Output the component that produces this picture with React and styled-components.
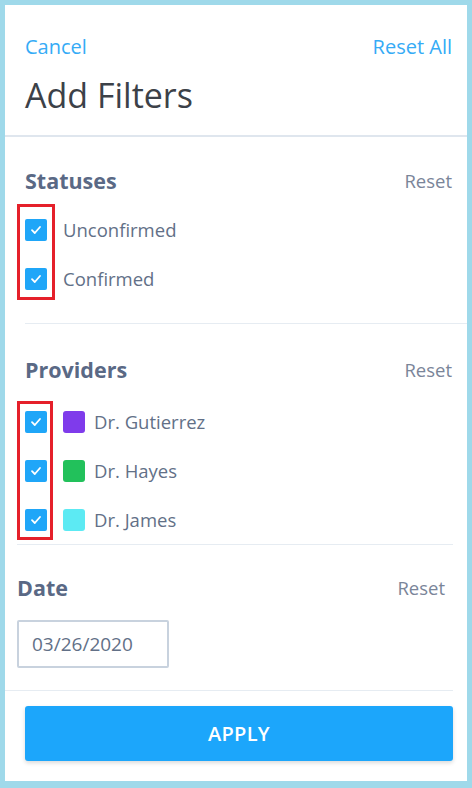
import React from "react";
import styled, { createGlobalStyle } from "styled-components";

const GlobalStyle = createGlobalStyle`
  html, body {
    margin: 0;
    padding: 0;
    background: #ffffff;
  }
  * {
    box-sizing: border-box;
  }
`;

const Frame = styled.div`
  width: 472px;
  height: 788px;
  border: 5px solid #9fd9ea;
  border-bottom-width: 7px;
  background: #ffffff;
  display: flex;
  flex-direction: column;
  font-family: "Open Sans", "Liberation Sans", sans-serif;
`;

const Header = styled.div`
  padding: 30px 15px 0 20px;
`;

const TopRow = styled.div`
  display: flex;
  justify-content: space-between;
  align-items: center;
  height: 22px;
`;

const LinkText = styled.span`
  color: #35abf6;
  font-size: 20px;
`;

const Title = styled.h1`
  margin: 18px 0 0;
  font-size: 34px;
  line-height: 40px;
  font-weight: 400;
  color: #3c4148;
  height: 60px;
`;

const Divider = styled.div`
  height: ${(p) => p.$thick || 1}px;
  background: ${(p) => p.$color || "#e6ecf2"};
  margin-left: ${(p) => p.$left || 0}px;
  margin-right: ${(p) => p.$right || 0}px;
`;

const Section = styled.div`
  padding: ${(p) => p.$top}px ${(p) => p.$padRight}px ${(p) => p.$bottom}px
    ${(p) => p.$padLeft}px;
`;

const SectionHead = styled.div`
  display: flex;
  justify-content: space-between;
  align-items: center;
  height: 24px;
`;

const SectionTitle = styled.h2`
  margin: 0;
  font-size: 21.5px;
  font-weight: 700;
  color: #5a6985;
`;

const ResetText = styled.span`
  font-size: 18.5px;
  color: #7a8599;
`;

const List = styled.div`
  position: relative;
  margin-top: ${(p) => p.$gap}px;
`;

const Highlight = styled.div`
  position: absolute;
  left: -8px;
  top: ${(p) => p.$top}px;
  bottom: ${(p) => p.$bottom}px;
  width: ${(p) => p.$width}px;
  border: 3px solid #e5202a;
  pointer-events: none;
`;

const Row = styled.div`
  display: flex;
  align-items: center;
  height: 49px;
  gap: 16px;
`;

const Check = styled.span`
  width: 22px;
  height: 22px;
  border-radius: 2px;
  background: #1fa6f8;
  display: flex;
  align-items: center;
  justify-content: center;
  flex-shrink: 0;
`;

const Swatch = styled.span`
  width: 22px;
  height: 22px;
  border-radius: 3px;
  background: ${(p) => p.$color};
  flex-shrink: 0;
  margin-right: -7px;
`;

const Label = styled.span`
  font-size: 18.5px;
  color: #627087;
`;

const DateBox = styled.div`
  margin-top: 21px;
  width: 152px;
  height: 48px;
  border: 2px solid #c8d2de;
  border-radius: 2px;
  display: flex;
  align-items: center;
  padding-left: 13px;
  font-size: 19px;
  color: #627087;
`;

const Footer = styled.div`
  padding: 15px 14px 0 20px;
`;

const ApplyButton = styled.button`
  width: 428px;
  height: 55px;
  border: none;
  border-radius: 3px;
  background: #1ca6fb;
  color: #ffffff;
  font-family: inherit;
  font-size: 20px;
  font-weight: 600;
  letter-spacing: 0.3px;
  box-shadow: 0 2px 4px rgba(0, 0, 0, 0.15);
`;

const Tick = () => (
  <svg width="14" height="14" viewBox="0 0 14 14">
    <path
      d="M3 7.2 L5.8 10 L11 4"
      fill="none"
      stroke="#ffffff"
      strokeWidth="1.8"
      strokeLinecap="round"
      strokeLinejoin="round"
    />
  </svg>
);

const statuses = ["Unconfirmed", "Confirmed"];

const providers = [
  { name: "Dr. Gutierrez", color: "#7f3beb" },
  { name: "Dr. Hayes", color: "#22c15b" },
  { name: "Dr. James", color: "#5ceaf3" },
];

export default function App() {
  return (
    <>
      <GlobalStyle />
      <Frame>
        <Header>
          <TopRow>
            <LinkText>Cancel</LinkText>
            <LinkText>Reset All</LinkText>
          </TopRow>
          <Title>Add Filters</Title>
        </Header>
        <Divider $thick={2} $color="#dfe6ee" />

        <Section $top={31} $bottom={20} $padLeft={20} $padRight={15}>
          <SectionHead>
            <SectionTitle>Statuses</SectionTitle>
            <ResetText>Reset</ResetText>
          </SectionHead>
          <List $gap={13}>
            <Highlight $top={-1} $bottom={3} $width={38} />
            {statuses.map((s) => (
              <Row key={s}>
                <Check>
                  <Tick />
                </Check>
                <Label>{s}</Label>
              </Row>
            ))}
          </List>
        </Section>
        <Divider $left={20} />

        <Section $top={33} $bottom={0} $padLeft={20} $padRight={15}>
          <SectionHead>
            <SectionTitle>Providers</SectionTitle>
            <ResetText>Reset</ResetText>
          </SectionHead>
          <List $gap={16}>
            <Highlight $top={4} $bottom={4} $width={36} />
            {providers.map((p) => (
              <Row key={p.name}>
                <Check>
                  <Tick />
                </Check>
                <Swatch $color={p.color} />
                <Label>{p.name}</Label>
              </Row>
            ))}
          </List>
        </Section>
        <Divider $left={12} $right={14} />

        <Section $top={30} $bottom={22} $padLeft={12} $padRight={22}>
          <SectionHead>
            <SectionTitle>Date</SectionTitle>
            <ResetText>Reset</ResetText>
          </SectionHead>
          <DateBox>03/26/2020</DateBox>
        </Section>
        <Divider $right={14} />

        <Footer>
          <ApplyButton>APPLY</ApplyButton>
        </Footer>
      </Frame>
    </>
  );
}
